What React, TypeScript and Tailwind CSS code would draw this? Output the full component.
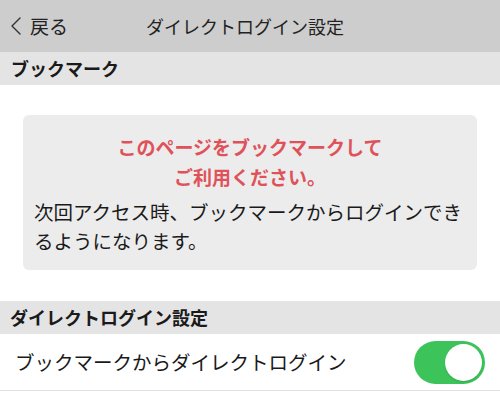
import { useState } from 'react';

const font = { fontFamily: '"Noto Sans CJK JP", "Noto Sans", sans-serif' };

export default function App() {
  const [direct, setDirect] = useState(true);

  return (
    <div className="w-[500px] h-[393px] bg-white overflow-hidden text-[#1a1a1a]" style={font}>
      {/* ナビゲーションバー */}
      <div className="relative h-[52px] bg-[#cdcdcd] flex items-center">
        <button className="flex items-center pl-[9px] text-[19px] text-[#222]">
          <svg width="14" height="20" viewBox="0 0 14 20" fill="none" className="mr-[7px]">
            <path d="M11 2 L3 10 L11 18" stroke="#333" strokeWidth="1.4" strokeLinecap="round" strokeLinejoin="round" />
          </svg>
          戻る
        </button>
        <div className="absolute inset-0 flex items-center justify-center pr-[10px] pointer-events-none">
          <span className="text-[18px] text-[#222]">ダイレクトログイン設定</span>
        </div>
      </div>

      {/* ブックマーク */}
      <div className="h-[33px] bg-[#e4e4e4] flex items-center px-[11px] text-[18px] font-bold">
        ブックマーク
      </div>
      <div className="px-[23px] pt-[30px] pb-[31px]">
        <div className="bg-[#ececec] rounded-[6px] pt-[17px] pb-[15px] px-[11px]">
          <p className="text-center text-[#e0525a] font-bold text-[19px] leading-[30px]">
            このページをブックマークして
            <br />
            ご利用ください。
          </p>
          <p className="mt-[5px] text-[19.5px] leading-[29px]">
            次回アクセス時、ブックマークからログインでき
            <br />
            るようになります。
          </p>
        </div>
      </div>

      {/* ダイレクトログイン設定 */}
      <div className="h-[33px] bg-[#e4e4e4] flex items-center px-[10px] text-[18px] font-bold">
        ダイレクトログイン設定
      </div>
      <div className="h-[57px] flex items-center justify-between pl-[15px] pr-[15px] border-b border-[#e2e2e2]">
        <span className="text-[19.5px]">ブックマークからダイレクトログイン</span>
        <button
          onClick={() => setDirect(!direct)}
          className={`w-[71px] h-[43px] rounded-full p-[3px] flex items-center ${direct ? 'bg-[#3cc45a] justify-end' : 'bg-[#e5e5e5] justify-start'}`}
        >
          <span className="block w-[37px] h-[37px] rounded-full bg-white shadow-[0_1px_2px_rgba(0,0,0,0.15)]" />
        </button>
      </div>
    </div>
  );
}
